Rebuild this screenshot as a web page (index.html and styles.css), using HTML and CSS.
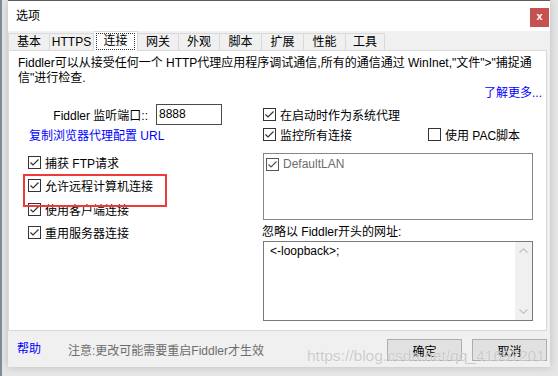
FILE: index.html
```html
<!DOCTYPE html>
<html lang="zh-CN">
  <head>
    <meta charset="UTF-8" />
    <title>选项</title>
    <link rel="stylesheet" href="styles.css">
  </head>
  <body>
    <div class="window">
      <div class="titlebar">
        <span class="title">选项</span>
        <span class="close">x</span>
      </div>

      <div class="frame">
        <div class="tabs">
          <div class="tab">基本</div>
          <div class="tab wide">HTTPS</div>
          <div class="tab wide active"><span class="focus">连接</span></div>
          <div class="tab narrow">网关</div>
          <div class="tab narrow">外观</div>
          <div class="tab">脚本</div>
          <div class="tab">扩展</div>
          <div class="tab">性能</div>
          <div class="tab slim">工具</div>
        </div>

        <div class="panel">
          <p class="desc">Fiddler可以从接受任何一个 HTTP代理应用程序调试通信,所有的通信通过 WinInet,"文件"&gt;"捕捉通<br>信"进行检查.</p>
          <div class="more"><a class="link">了解更多...</a></div>

          <div class="columns">
            <div class="col-left">
              <div class="port-row">
                <span class="port-label">Fiddler 监听端口::</span>
                <span class="port">8888</span>
              </div>
              <a class="link copy">复制浏览器代理配置 URL</a>

              <div class="checks">
                <div class="check">
                  <svg class="box" width="13" height="13" viewBox="0 0 13 13"><rect x="0.5" y="0.5" width="12" height="12" fill="#fff" stroke="#333"/><path d="M2.5 6.5 L5 9 L10.5 3.5" fill="none" stroke="#333" stroke-width="1.2"/></svg>
                  <span>捕获 FTP请求</span>
                </div>
                <div class="check marked">
                  <svg class="box" width="13" height="13" viewBox="0 0 13 13"><rect x="0.5" y="0.5" width="12" height="12" fill="#fff" stroke="#333"/><path d="M2.5 6.5 L5 9 L10.5 3.5" fill="none" stroke="#333" stroke-width="1.2"/></svg>
                  <span>允许远程计算机连接</span>
                </div>
                <div class="check">
                  <svg class="box" width="13" height="13" viewBox="0 0 13 13"><rect x="0.5" y="0.5" width="12" height="12" fill="#fff" stroke="#333"/><path d="M2.5 6.5 L5 9 L10.5 3.5" fill="none" stroke="#333" stroke-width="1.2"/></svg>
                  <span>使用客户端连接</span>
                </div>
                <div class="check">
                  <svg class="box" width="13" height="13" viewBox="0 0 13 13"><rect x="0.5" y="0.5" width="12" height="12" fill="#fff" stroke="#333"/><path d="M2.5 6.5 L5 9 L10.5 3.5" fill="none" stroke="#333" stroke-width="1.2"/></svg>
                  <span>重用服务器连接</span>
                </div>
              </div>
            </div>

            <div class="col-right">
              <div class="check">
                <svg class="box" width="13" height="13" viewBox="0 0 13 13"><rect x="0.5" y="0.5" width="12" height="12" fill="#fff" stroke="#333"/><path d="M2.5 6.5 L5 9 L10.5 3.5" fill="none" stroke="#333" stroke-width="1.2"/></svg>
                <span>在启动时作为系统代理</span>
              </div>
              <div class="check-pair">
                <div class="check first">
                  <svg class="box" width="13" height="13" viewBox="0 0 13 13"><rect x="0.5" y="0.5" width="12" height="12" fill="#fff" stroke="#333"/><path d="M2.5 6.5 L5 9 L10.5 3.5" fill="none" stroke="#333" stroke-width="1.2"/></svg>
                  <span>监控所有连接</span>
                </div>
                <div class="check">
                  <svg class="box" width="13" height="13" viewBox="0 0 13 13"><rect x="0.5" y="0.5" width="12" height="12" fill="#fff" stroke="#333"/></svg>
                  <span>使用 PAC脚本</span>
                </div>
              </div>

              <div class="listbox">
                <div class="check item">
                  <svg class="box" width="13" height="13" viewBox="0 0 13 13"><rect x="0.5" y="0.5" width="12" height="12" fill="#fff" stroke="#555"/><path d="M2.5 6.5 L5 9 L10.5 3.5" fill="none" stroke="#555" stroke-width="1.2"/></svg>
                  <span>DefaultLAN</span>
                </div>
              </div>

              <div class="bypass-label">忽略以 Fiddler开头的网址:</div>
              <div class="memo">
                <div class="memo-text">&lt;-loopback&gt;;</div>
                <div class="vscroll">
                  <div class="arrow">
                    <svg width="9" height="5" viewBox="0 0 9 5"><path d="M0.5 4.5 L4.5 0.8 L8.5 4.5" fill="none" stroke="#c2c2c2" stroke-width="1.2"/></svg>
                  </div>
                  <div class="arrow">
                    <svg width="9" height="5" viewBox="0 0 9 5"><path d="M0.5 0.5 L4.5 4.2 L8.5 0.5" fill="none" stroke="#c2c2c2" stroke-width="1.2"/></svg>
                  </div>
                </div>
              </div>
            </div>
          </div>
        </div>

        <div class="footer">
          <a class="link help">帮助</a>
          <span class="note">注意:更改可能需要重启Fiddler才生效</span>
          <div class="buttons">
            <button class="btn">确定</button>
            <button class="btn">取消</button>
          </div>
        </div>
      </div>

      <div class="watermark">https://blog.csdn.net/qq_41697201</div>
    </div>
  </body>
</html>
```

FILE: styles.css
```css
* {
  margin: 0;
  padding: 0;
  box-sizing: border-box;
}

body {
  width: 558px;
  height: 376px;
  overflow: hidden;
  background: #e6e6e6;
  border-left: 2px solid #7d8a9b;
  padding-left: 6px;
  font-family: "Liberation Sans", "Noto Sans CJK SC", sans-serif;
  font-size: 12px;
  color: #000;
}

.window {
  position: relative;
  width: 542px;
  height: 367px;
  background: #f0f0f0;
  border-top: 1px solid #5c5c5c;
  box-shadow: 0 0 8px rgba(0, 0, 0, 0.18);
  display: flex;
  flex-direction: column;
}

.titlebar {
  height: 30px;
  background: #fff;
  display: flex;
  align-items: center;
  justify-content: space-between;
  padding-left: 8px;
  padding-right: 1px;
}

.title {
  line-height: 14px;
}

.close {
  align-self: flex-start;
  margin-top: 7px;
  width: 19px;
  height: 19px;
  background: #c75050;
  color: #fff;
  font-weight: 700;
  font-size: 11px;
  line-height: 17px;
  text-align: center;
}

.frame {
  flex: 1;
  display: flex;
  flex-direction: column;
  padding-right: 3px;
}

/* Onglets */
.tabs {
  height: 19px;
  display: flex;
  align-items: flex-end;
}

.tab {
  width: 42px;
  height: 17px;
  border: 1px solid #d9d9d9;
  border-bottom: none;
  border-left: none;
  background: #f0f0f0;
  text-align: center;
  line-height: 16px;
}

.tab:first-child {
  border-left: 1px solid #d9d9d9;
}

.tab.wide { width: 44px; }
.tab.narrow { width: 41px; }
.tab.slim { width: 39px; }

.tab.active {
  height: 20px;
  margin-bottom: -1px;
  background: #fff;
  position: relative;
  z-index: 1;
  padding: 1px 2px 1px 2px;
}

.focus {
  display: block;
  height: 17px;
  border: 1px dotted #333;
  line-height: 15px;
}

/* Panneau */
.panel {
  height: 281px;
  border: 1px solid #d9d9d9;
  background: #fff;
}

.desc {
  padding: 5px 0 0 9px;
  line-height: 15px;
  white-space: nowrap;
}

.more {
  text-align: right;
  padding-right: 4px;
  line-height: 15px;
}

.link {
  color: #0000ff;
  text-decoration: none;
}

.columns {
  display: flex;
  margin-top: 3px;
}

.col-left {
  width: 253px;
}

.port-row {
  display: flex;
  align-items: center;
  height: 21px;
}

.port-label {
  width: 139px;
  text-align: right;
}

.port {
  margin-left: 8px;
  width: 66px;
  height: 21px;
  border: 1px solid #4a4a4a;
  padding-left: 2px;
  line-height: 19px;
}

.copy {
  display: block;
  margin: 4px 0 0 20px;
  line-height: 14px;
}

.checks {
  margin: 7.5px 0 0 19px;
}

.checks .check {
  height: 23.5px;
}

.check {
  display: flex;
  align-items: center;
  gap: 4px;
  height: 14px;
  white-space: nowrap;
}

.box {
  flex-shrink: 0;
  display: block;
}

.check.marked {
  position: relative;
}

.check.marked::after {
  content: "";
  position: absolute;
  left: -5px;
  top: 0;
  width: 140px;
  height: 29px;
  border: 2px solid #ef3a3a;
}

.col-right {
  width: 271px;
  padding-top: 3px;
  padding-left: 1px;
}

.check-pair {
  display: flex;
  margin-top: 6px;
}

.check.first {
  width: 165px;
}

.listbox {
  margin-top: 12px;
  height: 67px;
  border: 1px solid #828790;
  padding: 3px 2px;
}

.check.item {
  color: #6d6d6d;
}

.bypass-label {
  margin: 5px 0 0 -1px;
  line-height: 14px;
}

.memo {
  margin-top: 2px;
  height: 80px;
  border: 1px solid #7a7a7a;
  display: flex;
}

.memo-text {
  flex: 1;
  padding: 2px 0 0 6px;
  line-height: 14px;
}

.vscroll {
  width: 17px;
  background: #f0f0f0;
  display: flex;
  flex-direction: column;
  justify-content: space-between;
}

.arrow {
  height: 17px;
  display: flex;
  align-items: center;
  justify-content: center;
}

/* Barre du bas */
.footer {
  flex: 1;
  display: flex;
  align-items: center;
  padding: 0 0 0 9px;
}

.help {
  line-height: 14px;
}

.note {
  margin-left: 27px;
  color: #6d6d6d;
}

.buttons {
  margin-left: auto;
  display: flex;
  gap: 10px;
  margin-top: 2px;
}

.btn {
  width: 75px;
  height: 22px;
  background: #e1e1e1;
  border: 1px solid #adadad;
  font-family: inherit;
  font-size: 12px;
  color: #000;
}

.watermark {
  position: absolute;
  left: 299px;
  top: 346px;
  font-size: 15.5px;
  line-height: 18px;
  color: rgba(185, 185, 185, 0.75);
  text-shadow: 0 0 1px #fff;
  white-space: nowrap;
  pointer-events: none;
}
```
